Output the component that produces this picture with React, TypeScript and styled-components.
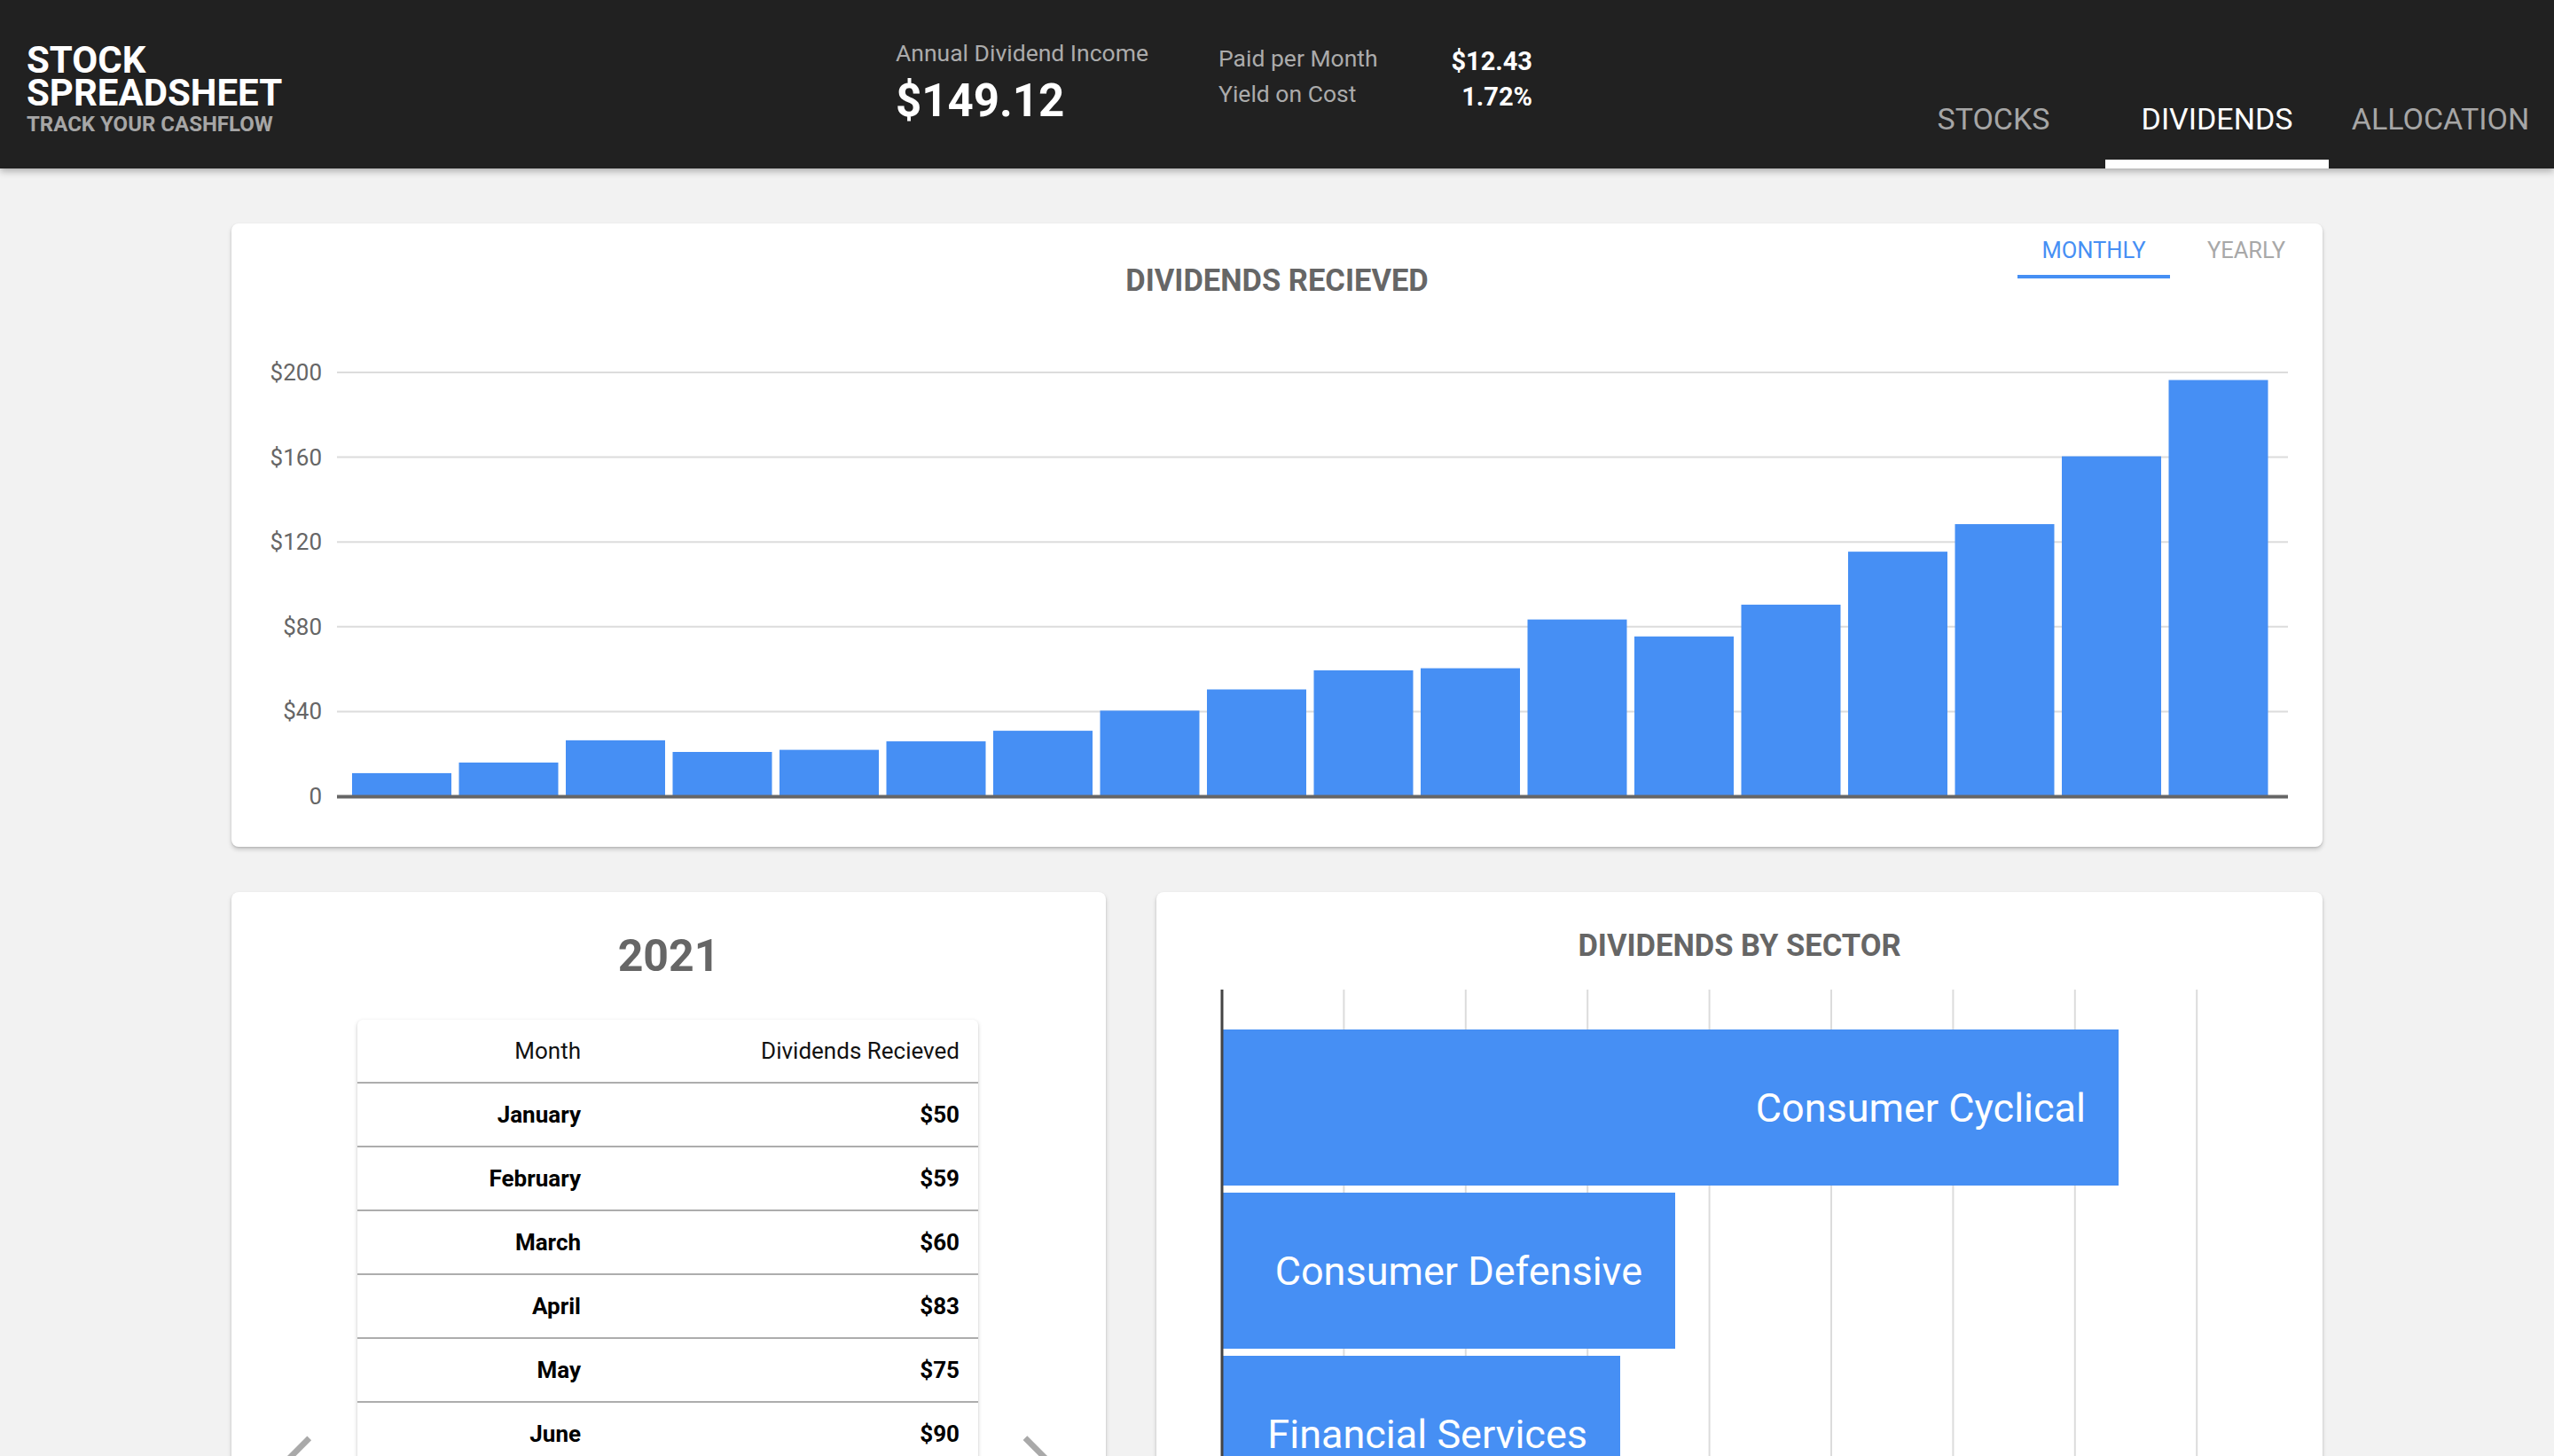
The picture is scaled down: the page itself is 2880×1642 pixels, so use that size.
import { createGlobalStyle, styled } from "styled-components";

const monthly = [
  10.5, 15.5, 26, 20.5, 21.5, 25.5, 30.5, 40, 50, 59, 60, 83, 75, 90, 115, 128,
  160, 196,
];

const sectors = [
  { name: "Consumer Cyclical", width: 1010 },
  { name: "Consumer Defensive", width: 510 },
  { name: "Financial Services", width: 448 },
];

const rows = [
  { month: "January", amount: "$50" },
  { month: "February", amount: "$59" },
  { month: "March", amount: "$60" },
  { month: "April", amount: "$83" },
  { month: "May", amount: "$75" },
  { month: "June", amount: "$90" },
  { month: "July", amount: "$115" },
  { month: "August", amount: "$128" },
  { month: "September", amount: "$160" },
  { month: "October", amount: "$196" },
];

const BLUE = "#468ff4";

const App = () => {
  return (
    <>
      <GlobalStyle />
      <Header>
        <Brand>
          <BrandLine>STOCK</BrandLine>
          <BrandLine>SPREADSHEET</BrandLine>
          <BrandSub>TRACK YOUR CASHFLOW</BrandSub>
        </Brand>
        <Annual>
          <StatLabel>Annual Dividend Income</StatLabel>
          <AnnualValue>$149.12</AnnualValue>
        </Annual>
        <StatGrid>
          <StatLabel>Paid per Month</StatLabel>
          <StatValue>$12.43</StatValue>
          <StatLabel>Yield on Cost</StatLabel>
          <StatValue>1.72%</StatValue>
        </StatGrid>
        <NavTabs>
          <NavTab>STOCKS</NavTab>
          <NavTab $active>DIVIDENDS</NavTab>
          <NavTab>ALLOCATION</NavTab>
        </NavTabs>
      </Header>

      <Main>
        <TopCard>
          <CardHead>
            <ChartTitle>DIVIDENDS RECIEVED</ChartTitle>
            <RangeTabs>
              <RangeTab $active>MONTHLY</RangeTab>
              <RangeTab>YEARLY</RangeTab>
            </RangeTabs>
          </CardHead>
          <svg width="2358" height="615" style={{ display: "block" }}>
            {[200, 160, 120, 80, 40].map((v) => {
              const y = 558 - v * 2.39;
              return (
                <g key={v}>
                  <line x1="119" x2="2319" y1={y} y2={y} stroke="#dcdcdc" strokeWidth="2" />
                  <AxisText x="102" y={y + 9} textAnchor="end">
                    ${v}
                  </AxisText>
                </g>
              );
            })}
            <AxisText x="102" y={567} textAnchor="end">
              0
            </AxisText>
            {monthly.map((v, i) => (
              <rect
                key={i}
                x={136 + i * 120.5}
                y={557 - v * 2.39}
                width="112"
                height={v * 2.39}
                fill={BLUE}
              />
            ))}
            <line x1="119" x2="2319" y1="558.5" y2="558.5" stroke="#666" strokeWidth="4" />
          </svg>
        </TopCard>

        <BottomRow>
          <YearCard>
            <YearTitle>2021</YearTitle>
            <TableRow>
              <Arrow viewBox="0 0 24 24" $side="left">
                <path d="M11.67 3.87 9.9 2.1 0 12l9.9 9.9 1.77-1.77L3.54 12z" />
              </Arrow>
              <Table>
                <Row $head>
                  <Cell>Month</Cell>
                  <Cell>Dividends Recieved</Cell>
                </Row>
                {rows.map((r) => (
                  <Row key={r.month}>
                    <Cell>{r.month}</Cell>
                    <Cell>{r.amount}</Cell>
                  </Row>
                ))}
              </Table>
              <Arrow viewBox="0 0 24 24" $side="right">
                <path d="M6.23 20.23 8 22l10-10L8 2 6.23 3.77 14.46 12z" />
              </Arrow>
            </TableRow>
          </YearCard>

          <SectorCard>
            <SectorTitle>DIVIDENDS BY SECTOR</SectorTitle>
            <svg width="1315" height="700" style={{ display: "block" }}>
              {Array.from({ length: 8 }, (_, k) => {
                const x = 74 + (k + 1) * 137.4;
                return (
                  <line key={k} x1={x} x2={x} y1="30" y2="700" stroke="#dcdcdc" strokeWidth="2" />
                );
              })}
              {sectors.map((s, i) => {
                const y = 75 + i * 184;
                return (
                  <g key={s.name}>
                    <rect x="75" y={y} width={s.width} height="176" fill={BLUE} />
                    <SectorText x={75 + s.width - 37} y={y + 104} textAnchor="end">
                      {s.name}
                    </SectorText>
                  </g>
                );
              })}
              <line x1="74" x2="74" y1="30" y2="700" stroke="#444" strokeWidth="3" />
            </svg>
          </SectorCard>
        </BottomRow>
      </Main>
    </>
  );
};

export default App;

const GlobalStyle = createGlobalStyle`
  body {
    margin: 0;
    background: #f2f2f2;
    font-family: Roboto, "Liberation Sans", sans-serif;
  }
`;

const Header = styled.header`
  position: relative;
  z-index: 1;
  height: 190px;
  display: flex;
  background: #212121;
  box-shadow: 0 3px 8px rgba(0, 0, 0, 0.3);
`;

const Brand = styled.div`
  width: 1010px;
  box-sizing: border-box;
  padding: 49px 0 0 30px;
`;

const BrandLine = styled.div`
  height: 37px;
  font-size: 42px;
  line-height: 37px;
  font-weight: 700;
  color: #fff;
`;

const BrandSub = styled.div`
  margin-top: 3px;
  font-size: 24px;
  line-height: 28px;
  font-weight: 700;
  color: #a6a6a6;
`;

const Annual = styled.div`
  width: 364px;
  padding-top: 43px;
`;

const StatLabel = styled.div`
  font-size: 26.5px;
  line-height: 34px;
  color: #ababab;
`;

const AnnualValue = styled.div`
  margin-top: 7px;
  font-size: 51px;
  line-height: 60px;
  font-weight: 700;
  color: #fff;
`;

const StatGrid = styled.div`
  display: grid;
  grid-template-columns: 180px 174px;
  grid-auto-rows: 40px;
  padding-top: 46px;
  align-self: flex-start;

  & > div {
    line-height: 40px;
  }
`;

const StatValue = styled.div`
  font-size: 29px;
  font-weight: 700;
  color: #fff;
  text-align: right;
  padding-top: 3px;
`;

const NavTabs = styled.nav`
  margin-left: auto;
  padding-right: 2px;
  display: flex;
  align-self: flex-end;
`;

const NavTab = styled.div<{ $active?: boolean }>`
  width: 252px;
  height: 76px;
  box-sizing: border-box;
  text-align: center;
  font-size: 34px;
  line-height: 40px;
  color: ${(p) => (p.$active ? "#fff" : "#a6a6a6")};
  border-bottom: 10px solid ${(p) => (p.$active ? "#fff" : "transparent")};
`;

const Main = styled.main`
  width: 2358px;
  margin: 62px auto 0;
`;

const Card = styled.section`
  background: #fff;
  border-radius: 8px;
  box-shadow: 0 3px 5px rgba(0, 0, 0, 0.18), 0 1px 2px rgba(0, 0, 0, 0.12);
`;

const TopCard = styled(Card)`
  height: 703px;
  overflow: hidden;
`;

const CardHead = styled.div`
  display: grid;
  grid-template-columns: 1fr auto 1fr;
  height: 88px;
`;

const ChartTitle = styled.h2`
  grid-column: 2;
  margin: 0;
  padding-top: 44px;
  font-size: 34.5px;
  line-height: 40px;
  font-weight: 700;
  color: #666;
`;

const RangeTabs = styled.div`
  grid-column: 3;
  justify-self: end;
  align-self: start;
  display: flex;
`;

const RangeTab = styled.div<{ $active?: boolean }>`
  width: 172px;
  height: 62px;
  box-sizing: border-box;
  display: flex;
  align-items: center;
  justify-content: center;
  padding-top: 2px;
  font-size: 25.5px;
  color: ${(p) => (p.$active ? BLUE : "#a8a8a8")};
  border-bottom: 4px solid ${(p) => (p.$active ? BLUE : "transparent")};
`;

const AxisText = styled.text`
  font-family: Roboto, sans-serif;
  font-size: 26px;
  fill: #666;
`;

const BottomRow = styled.div`
  display: grid;
  grid-template-columns: 986px 1315px;
  column-gap: 57px;
  margin-top: 51px;
`;

const YearCard = styled(Card)`
  padding-top: 42px;
  min-height: 1100px;
`;

const YearTitle = styled.h2`
  margin: 0;
  text-align: center;
  font-size: 50px;
  line-height: 60px;
  font-weight: 700;
  color: #666;
`;

const TableRow = styled.div`
  display: flex;
  justify-content: center;
  align-items: flex-start;
  margin-top: 42px;
  padding-left: 13px;
`;

const Arrow = styled.svg<{ $side: "left" | "right" }>`
  width: 64px;
  height: 64px;
  flex: none;
  fill: #a9a9a9;
  margin-top: 464px;
  margin-right: ${(p) => (p.$side === "left" ? "19px" : "0")};
  margin-left: ${(p) => (p.$side === "right" ? "34px" : "0")};
`;

const Table = styled.div`
  width: 700px;
  background: #fff;
  border-radius: 6px;
  box-shadow: 0 2px 5px rgba(0, 0, 0, 0.18), 0 1px 2px rgba(0, 0, 0, 0.1);
  overflow: hidden;
`;

const Row = styled.div<{ $head?: boolean }>`
  display: grid;
  grid-template-columns: 273px 1fr;
  align-items: center;
  height: 72px;
  box-sizing: border-box;
  border-bottom: 2px solid #adadad;
  font-size: 26px;
  font-weight: ${(p) => (p.$head ? 400 : 700)};
  color: ${(p) => (p.$head ? "#111" : "#000")};
`;

const Cell = styled.div`
  text-align: right;
  padding-right: 21px;
`;

const SectorCard = styled(Card)`
  padding-top: 40px;
  min-height: 1100px;
`;

const SectorTitle = styled.h2`
  margin: 0;
  text-align: center;
  font-size: 34.5px;
  line-height: 40px;
  font-weight: 700;
  color: #666;
`;

const SectorText = styled.text`
  font-family: Roboto, sans-serif;
  font-size: 45px;
  fill: #fff;
`;
